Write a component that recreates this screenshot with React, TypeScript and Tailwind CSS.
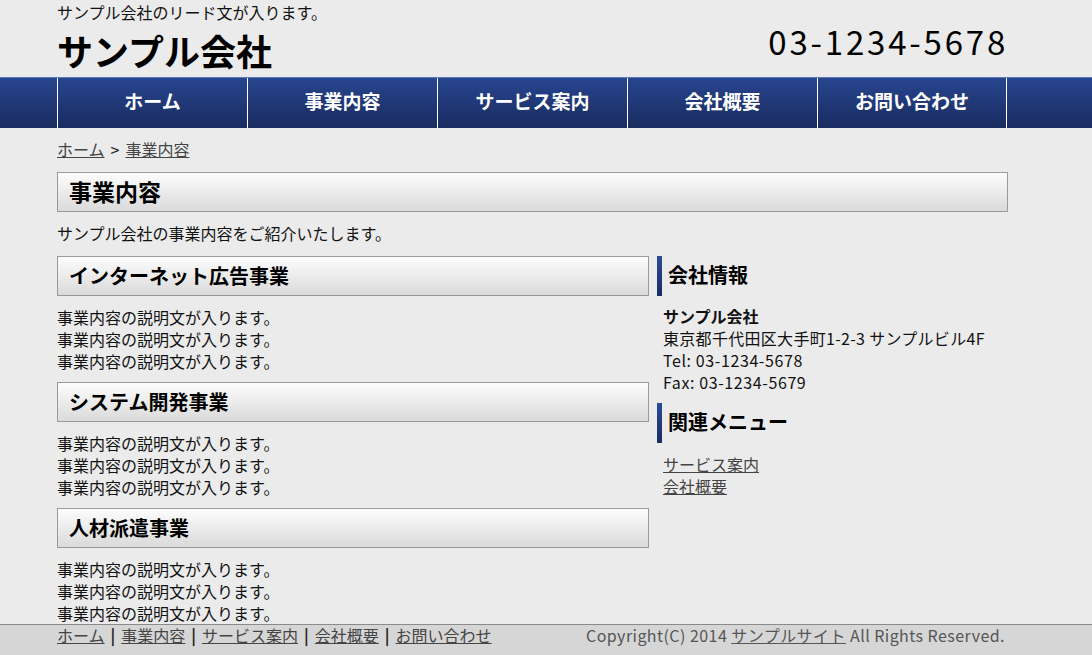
import React from "react";

const font = { fontFamily: '"Noto Sans CJK JP", "Noto Sans", sans-serif' };

const navItems = ["ホーム", "事業内容", "サービス案内", "会社概要", "お問い合わせ"];

function Section({ title }: { title: string }) {
  return (
    <div>
      <h3 className="h-[40px] border border-[#9a9a9a] bg-gradient-to-b from-[#fdfdfd] to-[#dadada] pl-[11px] text-[20px] font-bold leading-[37px] text-black">
        {title}
      </h3>
      <div className="mt-[10px] text-[16px] leading-[22px]">
        <p>事業内容の説明文が入ります。</p>
        <p>事業内容の説明文が入ります。</p>
        <p>事業内容の説明文が入ります。</p>
      </div>
    </div>
  );
}

function SideHead({ title }: { title: string }) {
  return (
    <div className="flex h-[40px] items-stretch">
      <div className="w-[5px] bg-gradient-to-b from-[#2b4b9b] to-[#1b2c62]" />
      <h3 className="pl-[6px] text-[20px] font-bold leading-[38px] text-black">{title}</h3>
    </div>
  );
}

export default function App() {
  return (
    <div className="min-h-[655px] bg-[#ebebeb] text-[#111]" style={font}>
      <header className="ml-[57px] w-[951px]">
        <p className="h-[24px] text-[16px] leading-[24px]">サンプル会社のリード文が入ります。</p>
        <div className="flex h-[53px] items-start justify-between">
          <h1 className="text-[36px] font-bold leading-[52px] text-black">サンプル会社</h1>
          <p className="-mt-[9px] text-[33px] leading-[52px] tracking-[2.8px] text-black">03-1234-5678</p>
        </div>
      </header>
      <nav className="border-t border-[#5d79b6] bg-gradient-to-b from-[#27458f] to-[#1a2c60]">
        <ul className="ml-[57px] flex w-[951px]">
          {navItems.map((n, i) => (
            <li
              key={n}
              className={
                "flex h-[50px] w-[190px] items-center justify-center border-l border-white pb-[3px] text-[19px] font-bold text-white" +
                (i === navItems.length - 1 ? " border-r" : "")
              }
            >
              {n}
            </li>
          ))}
        </ul>
      </nav>
      <main className="ml-[57px] w-[951px]">
        <p className="mt-[10px] text-[16px] leading-[22px] text-[#444]">
          <a className="underline">ホーム</a>
          <span className="px-[6px] text-[#222]">&gt;</span>
          <a className="underline">事業内容</a>
        </p>
        <h2 className="mt-[12px] h-[40px] border border-[#9a9a9a] bg-gradient-to-b from-[#fdfdfd] to-[#dadada] pl-[11px] text-[23px] font-bold leading-[37px] text-black">
          事業内容
        </h2>
        <p className="mt-[10px] text-[16px] leading-[22px]">サンプル会社の事業内容をご紹介いたします。</p>
        <div className="mt-[12px] flex gap-[8px]">
          <div className="flex w-[592px] flex-col gap-[10px]">
            <Section title="インターネット広告事業" />
            <Section title="システム開発事業" />
            <Section title="人材派遣事業" />
          </div>
          <aside className="w-[351px]">
            <SideHead title="会社情報" />
            <div className="mt-[9px] pl-[6px] text-[16px] leading-[22px]">
              <p className="font-bold">サンプル会社</p>
              <p className="tracking-[0.3px]">東京都千代田区大手町1-2-3 サンプルビル4F</p>
              <p className="tracking-[0.6px]">Tel: 03-1234-5678</p>
              <p className="tracking-[0.6px]">Fax: 03-1234-5679</p>
            </div>
            <div className="mt-[10px]">
              <SideHead title="関連メニュー" />
            </div>
            <div className="mt-[10px] pl-[6px] text-[16px] leading-[22px] text-[#444]">
              <p><a className="underline">サービス案内</a></p>
              <p><a className="underline">会社概要</a></p>
            </div>
          </aside>
        </div>
      </main>
      <footer className="h-[40px] border-t border-[#8a8a8a] bg-[#d6d6d6]">
        <div className="ml-[57px] flex w-[951px] justify-between text-[16px] leading-[20px] text-[#444]">
          <p>
            <a className="underline">ホーム</a>
            <span className="px-[6px] font-bold text-[#222]">|</span>
            <a className="underline">事業内容</a>
            <span className="px-[6px] font-bold text-[#222]">|</span>
            <a className="underline">サービス案内</a>
            <span className="px-[6px] font-bold text-[#222]">|</span>
            <a className="underline">会社概要</a>
            <span className="px-[6px] font-bold text-[#222]">|</span>
            <a className="underline">お問い合わせ</a>
          </p>
          <p className="pr-[3px] tracking-[0.45px] text-[#555]">
            Copyright(C) 2014 <a className="underline">サンプルサイト</a> All Rights Reserved.
          </p>
        </div>
      </footer>
    </div>
  );
}
